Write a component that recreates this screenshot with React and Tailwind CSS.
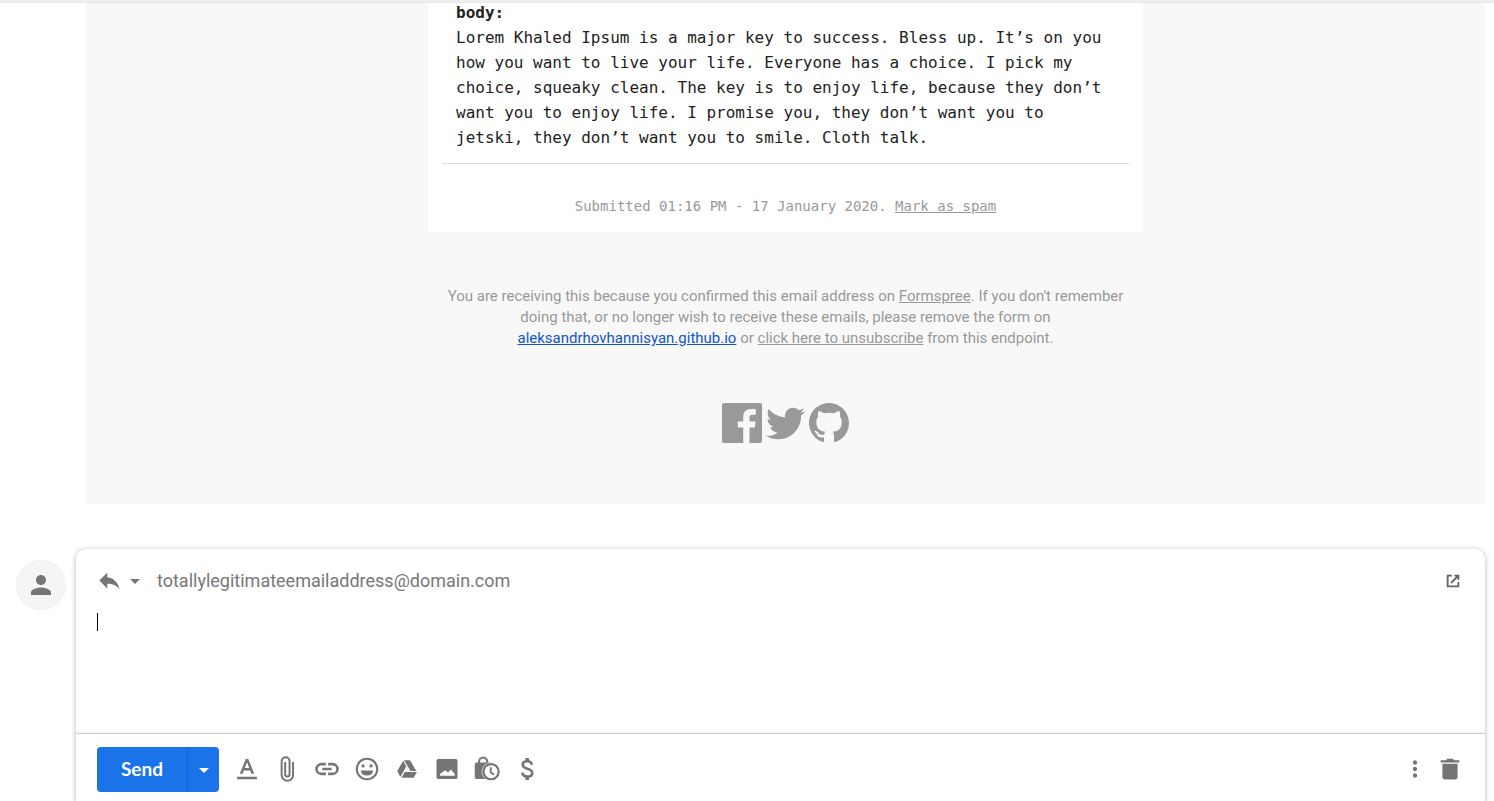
import React from "react";
import { MdArrowDropDown, MdMoreVert, MdPerson, MdReply } from "react-icons/md";
import { FaTwitter } from "react-icons/fa";

function Icon({ children, className = "size-7", viewBox = "0 0 24 24" }) {
  return (
    <svg className={className} viewBox={viewBox} fill="currentColor" aria-hidden="true">
      {children}
    </svg>
  );
}

const tools = [
  {
    label: "Formatting options",
    icon: (
      <Icon>
        <path d="M3.500 18.600h17v2.200h-17zM9.300 13.200h5.400l1.100 2.800h2.400L13.100 3.500h-2.200L5.800 16h2.400zM12 6.200l1.900 5h-3.800z" />
      </Icon>
    ),
  },
  {
    label: "Attach files",
    icon: (
      <Icon>
        <path
          d="M17.200 6v11.200a4.900 4.900 0 0 1-9.800 0V5.400a3.400 3.400 0 0 1 6.800 0v11.200a1.900 1.900 0 0 1-3.800 0V6"
          fill="none"
          stroke="currentColor"
          strokeWidth="1.700"
        />
      </Icon>
    ),
  },
  {
    label: "Insert link",
    icon: (
      <Icon>
        <path
          d="M11 7.800H7.200a4.200 4.200 0 0 0 0 8.400H11M13 7.800h3.800a4.200 4.200 0 0 1 0 8.400H13M8 12h8"
          fill="none"
          stroke="currentColor"
          strokeWidth="2.200"
        />
      </Icon>
    ),
  },
  {
    label: "Insert emoji",
    icon: (
      <Icon>
        <circle cx="12" cy="12" r="8.800" fill="none" stroke="currentColor" strokeWidth="1.800" />
        <circle cx="8.600" cy="9.400" r="1.400" />
        <circle cx="15.400" cy="9.400" r="1.400" />
        <path d="M6.600 13.200h10.800a5.500 5.500 0 0 1-10.800 0z" />
      </Icon>
    ),
  },
  {
    label: "Insert files using Drive",
    icon: (
      <Icon>
        <path d="M8.700 4.900 3.700 13.700 6.300 18.800 11.400 9.700z" />
        <path d="M9.400 4.400h5.200l5.400 9.300h-5z" />
        <path d="M10.100 14.500h10.400l-2.700 4.900H7.300z" />
      </Icon>
    ),
  },
  {
    label: "Insert photo",
    icon: (
      <Icon>
        <path
          fillRule="evenodd"
          d="M4.500 3.500h15a1.500 1.500 0 0 1 1.500 1.500v14a1.500 1.500 0 0 1-1.500 1.500h-15A1.500 1.500 0 0 1 3 19V5a1.500 1.500 0 0 1 1.500-1.500zM6 17.800h12.500v-1.800l-3.200-3.500-2.400 2.500-2.500-2L6 16.300z"
        />
      </Icon>
    ),
  },
  {
    label: "Toggle confidential mode",
    icon: (
      <Icon>
        <path d="M5.200 7V5.600a3.500 3.500 0 0 1 7 0V7" fill="none" stroke="currentColor" strokeWidth="1.800" />
        <path d="M3 6.500h11.500V20.500H3A1.500 1.500 0 0 1 1.500 19V8A1.500 1.500 0 0 1 3 6.500z" />
        <circle cx="15.500" cy="14.300" r="6.600" fill="white" stroke="currentColor" strokeWidth="2" />
        <circle cx="15.500" cy="14.300" r="7.800" fill="none" stroke="white" strokeWidth="0.500" />
        <path d="M15.200 10.400v4.400l2.800 2.200" fill="none" stroke="currentColor" strokeWidth="1.600" />
      </Icon>
    ),
  },
  {
    label: "Insert money",
    icon: (
      <Icon>
        <path
          d="M16 8.400c-.2-1.900-1.600-3-3.800-3-2.300 0-3.900 1.100-3.900 3 0 2 1.600 2.700 4 3.300 2.600.7 4.200 1.500 4.200 3.700 0 2-1.700 3.100-4.100 3.100-2.600 0-4.200-1.200-4.400-3.300"
          fill="none"
          stroke="currentColor"
          strokeWidth="2.200"
        />
        <path d="M10.700 2.500h3v3h-3zM10.700 18.500h3v3h-3z" />
      </Icon>
    ),
  },
];

function Message() {
  return (
    <article className="mr-[9px] ml-[86px] bg-[#f8f8f8] pb-[61px]">
      <section className="mx-auto max-w-[715px] bg-white px-3.5 pb-4 font-['DejaVu_Sans_Mono',monospace]">
        <div className="border-b border-[#dddddd] px-3.5 pb-[13px] text-[16px] leading-[25px] text-[#222222]">
          <h2 className="font-bold">body:</h2>
          <p>
            Lorem Khaled Ipsum is a major key to success. Bless up. It’s on you how you want to live
            your life. Everyone has a choice. I pick my choice, squeaky clean. The key is to enjoy
            life, because they don’t want you to enjoy life. I promise you, they don’t want you to
            jetski, they don’t want you to smile. Cloth talk.
          </p>
        </div>
        <p className="pt-8 text-center text-[14px] leading-5 text-[#999999]">
          Submitted 01:16 PM - 17 January 2020.{" "}
          <a href="#spam" className="underline">
            Mark as spam
          </a>
        </p>
      </section>
      <footer className="mx-auto flex max-w-[715px] flex-col items-center px-4 pt-[54px] text-[#999999]">
        <p className="text-center text-[15px] leading-[21px]">
          You are receiving this because you confirmed this email address on{" "}
          <a href="#formspree" className="underline">
            Formspree
          </a>
          . If you don't remember doing that, or no longer wish to receive these emails, please
          remove the form on{" "}
          <a href="#site" className="text-[#1155cc] underline">
            aleksandrhovhannisyan.github.io
          </a>{" "}
          or{" "}
          <a href="#unsubscribe" className="underline">
            click here to unsubscribe
          </a>{" "}
          from this endpoint.
        </p>
        <nav className="mt-[54px] flex items-center gap-1" aria-label="Social links">
          <a href="#facebook" aria-label="Facebook">
            <Icon className="size-10" viewBox="0 0 40 40">
              <path d="M2 0h36a2 2 0 0 1 2 2v36a2 2 0 0 1-2 2H27.500V24.500h5.300l.8-6h-6.100v-3.900c0-1.800.6-2.900 3-2.900h3.300V6.200c-.6-.1-2.500-.2-4.800-.2-4.700 0-7.800 2.800-7.800 8v4.500h-5.400v6h5.400V40H2a2 2 0 0 1-2-2V2a2 2 0 0 1 2-2z" />
            </Icon>
          </a>
          <a href="#twitter" aria-label="Twitter">
            <FaTwitter className="size-[39px]" />
          </a>
          <a href="#github" aria-label="GitHub">
            <Icon className="size-10" viewBox="0 0 16 16">
              <path d="M8 0C3.580 0 0 3.580 0 8c0 3.540 2.290 6.530 5.470 7.590.4.070.55-.17.55-.38 0-.19-.01-.82-.01-1.490-2.010.37-2.530-.49-2.690-.94-.09-.23-.48-.94-.82-1.130-.28-.15-.68-.52-.01-.53.63-.01 1.080.58 1.230.82.72 1.210 1.870.87 2.330.66.07-.52.28-.87.51-1.070-1.780-.2-3.640-.89-3.640-3.950 0-.87.31-1.590.82-2.150-.08-.2-.36-1.020.08-2.120 0 0 .67-.21 2.200.82.64-.18 1.320-.27 2-.27s1.360.09 2 .27c1.530-1.040 2.200-.82 2.200-.82.44 1.100.16 1.920.08 2.120.51.56.82 1.270.82 2.150 0 3.070-1.870 3.750-3.650 3.950.29.25.54.73.54 1.480 0 1.070-.01 1.930-.01 2.200 0 .21.15.46.55.38A8.010 8.010 0 0 0 16 8c0-4.420-3.580-8-8-8z" />
            </Icon>
          </a>
        </nav>
      </footer>
    </article>
  );
}

function Composer() {
  return (
    <form
      className="min-w-0 flex-1 rounded-t-[10px] bg-white shadow-[0_1px_5px_1px_rgba(0,0,0,0.2)]"
      onSubmit={(event) => event.preventDefault()}
    >
      <div className="flex h-[63px] items-center px-5 text-[#757575]">
        <button type="button" aria-label="Type of response" className="flex items-center">
          <MdReply className="size-[27px]" />
          <MdArrowDropDown className="size-6" />
        </button>
        <span className="ml-2.5 text-[18px] text-[#777777]">
          totallylegitimateemailaddress@domain.com
        </span>
        <button
          type="button"
          aria-label="Pop out reply"
          className="ml-auto p-1 text-[#666666]"
        >
          <Icon className="size-4">
            <path
              d="M10.500 4H4v16h16v-6.500M14 4h6v6M20 4 9 15"
              fill="none"
              stroke="currentColor"
              strokeWidth="2.800"
            />
          </Icon>
        </button>
      </div>
      <div className="flex h-[121px] px-[21px] pt-px">
        <span className="h-[18px] w-px bg-black" />
        <textarea
          aria-label="Message body"
          className="h-full flex-1 resize-none bg-transparent text-[18px] outline-none"
        />
      </div>
      <div className="flex items-start border-t border-[#d0d0d0] px-[21px] pt-[13px] pb-[9px] text-[#757575] shadow-[0_-1px_2px_rgba(0,0,0,0.08)]">
        <div className="flex h-[45px] overflow-hidden rounded bg-[#1a73e8] text-white">
          <button
            type="submit"
            className="w-[91px] border-r border-[#1764c8] font-['Lato',sans-serif] text-[19px] font-bold"
          >
            Send
          </button>
          <button
            type="button"
            aria-label="More send options"
            className="flex w-[31px] items-center justify-center"
          >
            <MdArrowDropDown className="size-6" />
          </button>
        </div>
        <div className="ml-[14px] flex h-[43px] items-center gap-3">
          {tools.map((tool) => (
            <button key={tool.label} type="button" aria-label={tool.label}>
              {tool.icon}
            </button>
          ))}
        </div>
        <div className="ml-auto flex h-[43px] items-center gap-2">
          <button type="button" aria-label="More options">
            <MdMoreVert className="size-[26px]" />
          </button>
          <button type="button" aria-label="Discard draft">
            <Icon>
              <path d="M5.500 7.500h13V19a2 2 0 0 1-2 2h-9a2 2 0 0 1-2-2zM4 4.500h4.500l1-1.200h5l1 1.200H20v2H4z" />
            </Icon>
          </button>
        </div>
      </div>
    </form>
  );
}

export default function App() {
  return (
    <main className="relative overflow-hidden bg-white font-['Roboto',sans-serif]">
      <div className="absolute inset-x-0 top-0 h-[3px] border-b border-[#e8e8e8] bg-[#efefef]" />
      <Message />
      <div className="mt-[45px] mr-[9px] ml-4 flex items-start gap-2.5">
        <div className="mt-[11px] flex size-[50px] shrink-0 items-center justify-center rounded-full border border-[#f0f0f0] bg-[#f5f5f5] text-[#757575]">
          <MdPerson className="size-[30px]" />
        </div>
        <Composer />
      </div>
    </main>
  );
}
